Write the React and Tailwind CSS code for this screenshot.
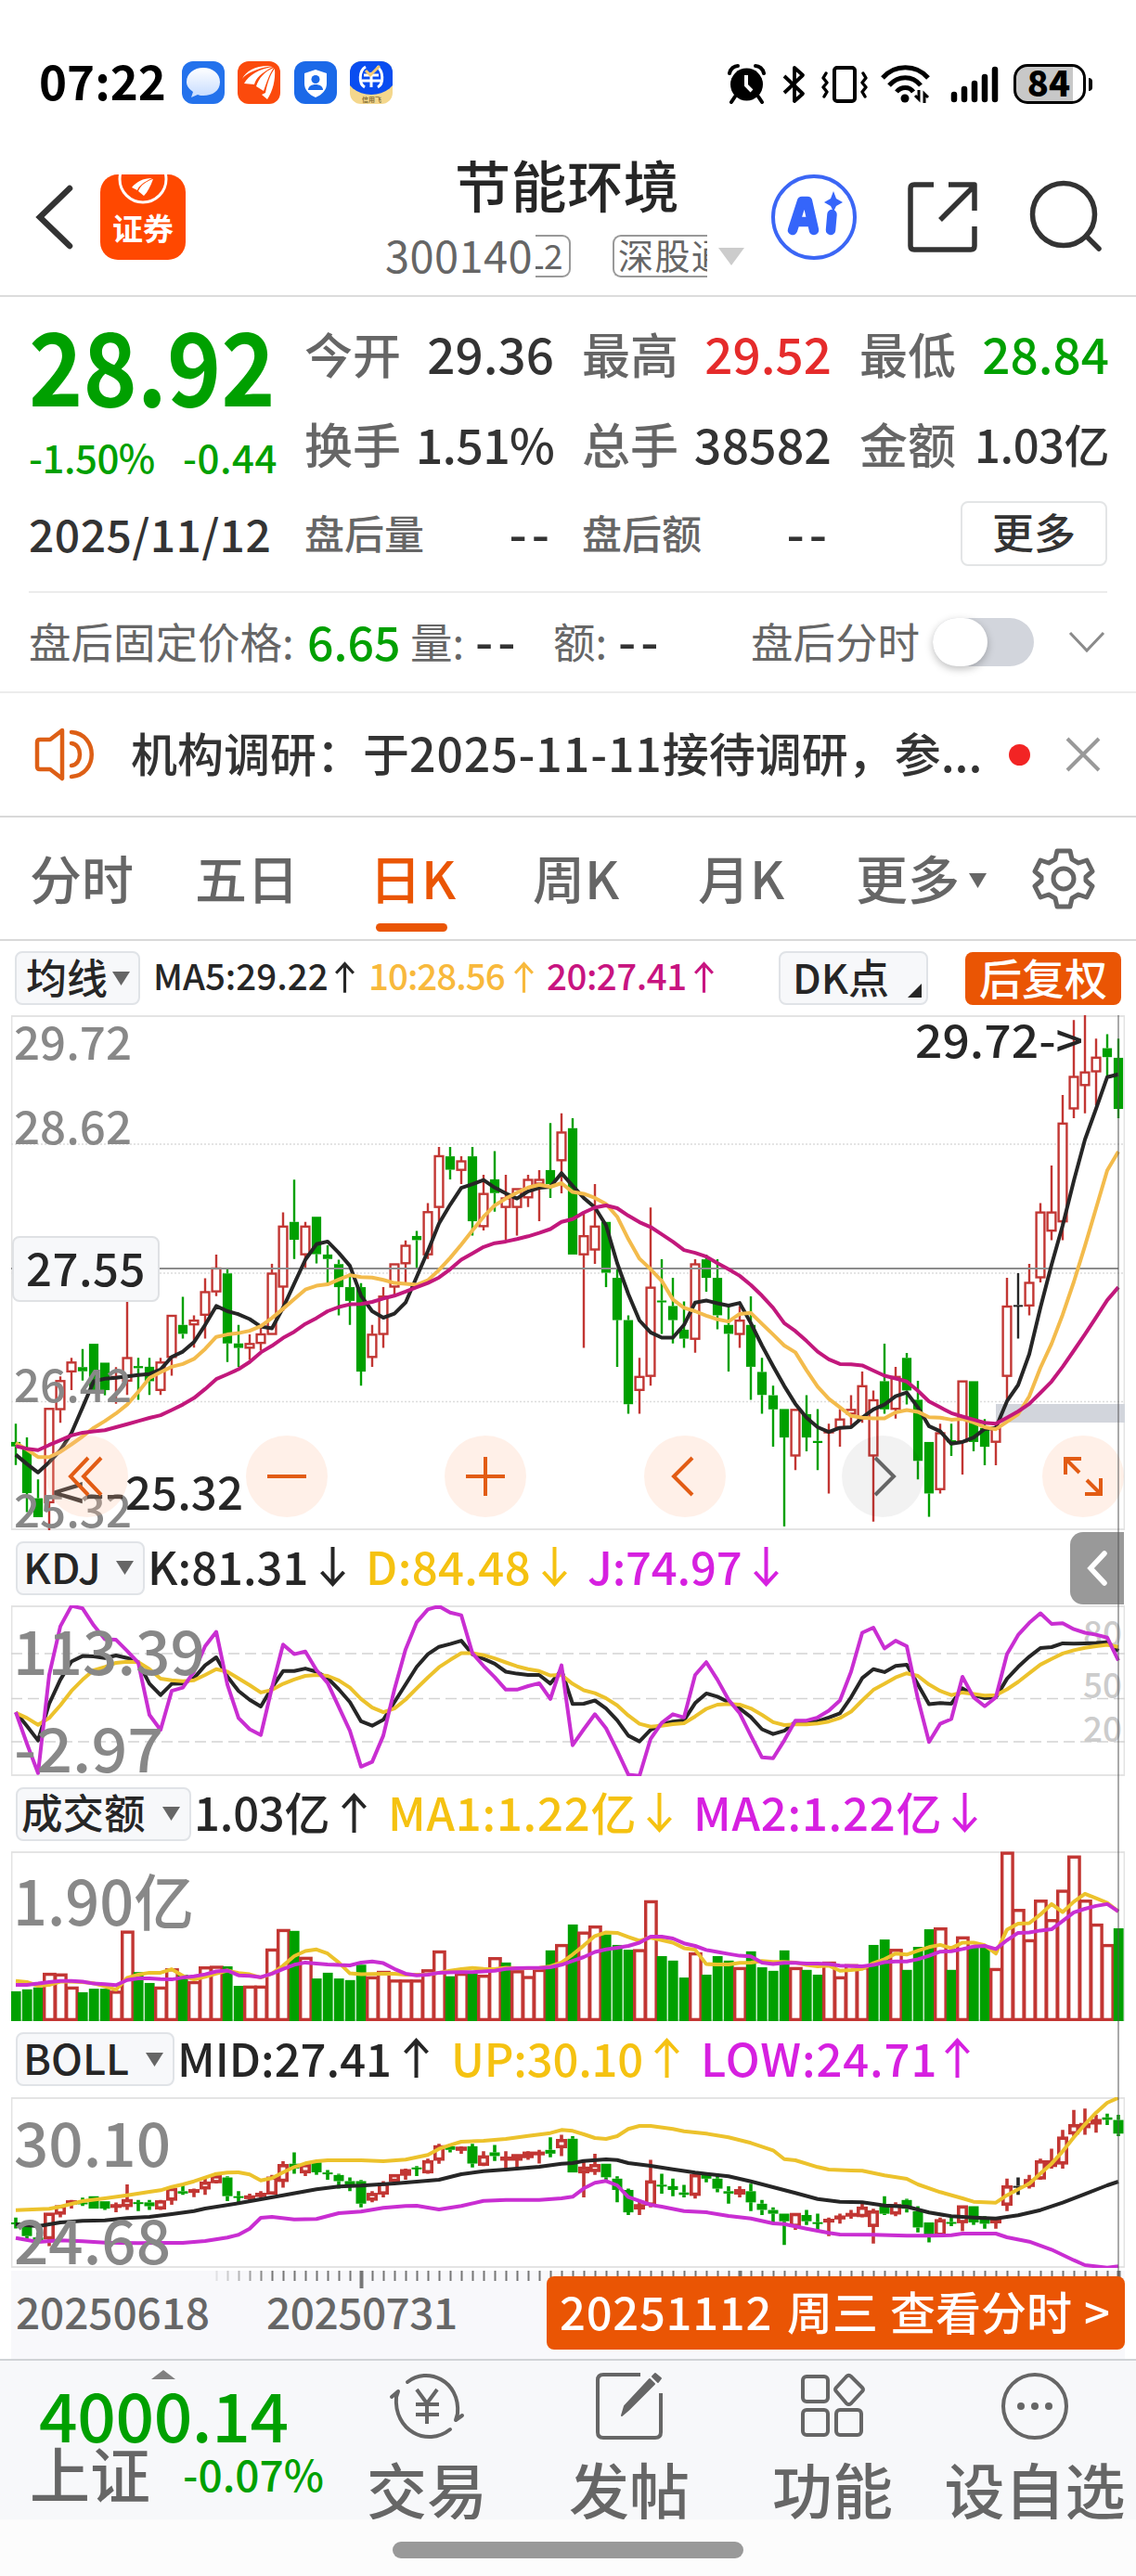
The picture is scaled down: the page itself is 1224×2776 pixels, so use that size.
import React from "react";

const FONT = "font-['Noto_Sans_CJK_SC','Liberation_Sans',sans-serif]";
const GREEN = "#00a000";
const RED = "#c23633";
const YELLOW = "#ecc22c";
const AMBER = "#f3bb4c";
const PURPLE = "#c92ed2";
const MAGENTA = "#c2187c";
const INK = "#262626";

/* One row per day: colour, high, body top, body bottom, low */
const CANDLES = `g 1228 1281 1294 1348|g 1268 1300 1430 1485|g 1390 1445 1500 1500|r 1183 1183 1458 1540|r 1090 1102 1187 1225|r 1036 1048 1077 1130|g 1010 1063 1075 1102|g 995 995 1130 1130|g 1050 1050 1130 1145|r 1063 1090 1092 1170|r 865 1035 1104 1144|g 1036 1060 1066 1158|g 1036 1062 1104 1144|r 1036 1048 1131 1144|r 912 912 1035 1088|g 858 940 966 980|r 912 926 940 1006|r 804 843 912 980|r 735 774 844 856|g 777 790 994 1048|g 940 994 1007 1062|r 968 994 1008 1042|r 940 966 994 1015|r 762 789 968 968|r 612 652 830 900|g 517 640 692 748|r 640 652 736 775|g 625 625 734 761|g 708 735 748 816|g 750 763 830 912|g 790 830 870 940|g 818 830 1076 1117|r 940 967 1035 1062|r 830 856 968 1007|r 762 762 830 858|r 694 708 762 816|g 666 681 693 775|r 585 610 736 748|r 422 447 598 640|g 422 449 488 516|r 449 462 490 530|g 422 449 638 680|r 503 557 654 665|g 434 516 556 610|r 503 570 598 694|r 543 543 598 680|r 503 516 570 597|r 489 516 530 638|g 352 489 530 570|r 324 378 462 557|g 338 367 735 735|r 610 680 736 1007|r 530 652 722 762|g 640 640 788 830|g 777 803 926 1062|g 912 926 1171 1199|r 1036 1090 1131 1199|r 598 830 1090 1117|g 749 869 874 966|g 803 885 926 994|g 872 954 980 1007|r 749 762 982 1021|g 735 749 803 843|g 749 803 912 953|g 885 940 966 1076|r 885 926 968 1007|g 857 940 1062 1158|g 1036 1077 1144 1199|g 1117 1145 1186 1295|g 1185 1185 1268 1527|r 1186 1186 1322 1363|g 1145 1200 1268 1308|g 1185 1278 1284 1363|r 1228 1250 1252 1431|r 1185 1214 1240 1295|r 1145 1186 1200 1240|r 1076 1117 1214 1225|r 1131 1158 1322 1513|g 995 1104 1186 1199|r 1062 1090 1186 1213|g 1022 1036 1131 1172|g 1103 1158 1336 1390|g 1281 1281 1431 1499|r 1228 1254 1420 1431|g 1228 1276 1282 1322|r 1103 1103 1281 1376|g 1104 1104 1281 1308|g 1214 1240 1295 1349|r 1228 1240 1282 1349|r 803 885 1090 1158|k 789 882 886 980|r 762 816 885 912|r 585 611 803 816|r 476 611 667 693|r 270 352 640 693|r 52 216 311 338|r 38 203 243 324|r 106 160 203 300|g 93 134 160 216|g 106 162 311 338`
  .split("|")
  .map((s) => {
    const [c, ...n] = s.split(" ");
    return [c, ...n.map(Number)];
  });

const MA5 = [1318,1345,1370,1340,1305,1255,1180,1104,1097,1094,1090,1086,1083,1070,1033,1018,990,940,885,900,909,923,945,950,890,820,750,705,697,730,768,855,900,919,907,875,800,725,645,590,541,530,518,540,557,572,551,541,538,498,535,570,598,650,760,850,927,962,977,977,940,875,869,877,884,876,935,1000,1060,1118,1170,1210,1238,1252,1240,1238,1210,1186,1172,1148,1137,1180,1235,1250,1286,1281,1268,1243,1240,1162,1115,1025,890,765,650,520,400,310,218,210];
const MA10 = [1284,1303,1325,1325,1310,1288,1265,1240,1220,1198,1172,1135,1095,1078,1062,1054,1039,1010,975,968,964,957,944,920,893,865,837,826,822,808,795,801,802,809,818,820,823,810,780,745,706,665,625,592,572,555,540,532,538,527,553,558,570,588,625,690,747,778,812,866,890,900,913,924,930,908,905,937,968,1000,1020,1072,1120,1155,1180,1205,1210,1212,1212,1195,1188,1193,1209,1210,1216,1214,1224,1238,1244,1222,1200,1148,1065,995,910,815,710,600,490,435];
const MA20 = [1293,1301,1305,1290,1276,1262,1254,1250,1247,1238,1229,1220,1211,1203,1188,1172,1153,1127,1098,1084,1069,1048,1020,1001,978,960,937,920,900,888,880,879,873,863,855,843,830,818,802,778,750,732,713,702,697,690,682,672,661,640,632,613,598,592,600,622,641,655,676,698,722,730,741,760,778,797,824,855,890,935,958,987,1018,1040,1054,1055,1058,1073,1088,1096,1105,1132,1163,1180,1197,1207,1216,1225,1228,1210,1192,1170,1138,1105,1062,1015,967,918,868,830];

const K_LINE = [567,610,655,540,465,408,391,392,397,389,397,410,477,513,478,477,460,420,395,455,500,528,549,490,438,438,430,440,460,495,535,595,609,590,535,480,425,385,362,353,343,385,400,415,440,446,450,450,477,435,541,540,530,555,592,640,658,622,605,596,592,538,508,518,535,555,582,620,635,625,597,598,595,583,570,520,460,432,441,422,418,480,542,538,540,492,513,523,520,462,425,393,366,363,351,352,351,350,348,375];
const D_LINE = [569,585,606,585,545,500,465,435,425,412,409,410,432,462,467,470,467,450,432,440,461,482,505,497,478,464,453,450,453,467,490,525,552,567,555,527,492,458,426,403,382,382,388,398,411,423,432,438,452,450,478,498,507,523,545,577,603,612,609,604,601,580,556,543,541,543,555,575,598,607,605,605,602,596,585,565,530,497,478,458,445,453,480,500,513,505,510,515,513,495,472,445,418,400,383,373,365,360,356,362];
const J_LINE = [567,665,757,450,298,234,242,295,338,340,375,412,575,622,500,490,440,360,315,480,585,620,638,490,355,385,377,435,475,550,625,737,722,640,495,370,285,245,235,255,263,382,422,457,496,496,485,476,525,420,670,620,573,617,687,762,766,650,600,573,583,450,410,465,528,570,640,708,711,655,593,593,583,562,530,440,318,302,367,343,360,525,660,603,588,456,520,548,520,385,325,287,257,290,288,307,318,324,333,405];

const VOLUME = "g1440 g1434 g1428 r1382 r1384 r1425 g1443 g1432 g1432 r1438 r1250 g1380 g1414 r1425 r1368 g1388 r1408 r1362 r1360 g1362 g1423 r1422 r1422 r1306 r1245 g1251 r1332 g1400 g1382 g1400 g1405 g1357 r1393 r1376 r1403 r1403 r1403 r1371 r1312 g1393 r1382 g1382 r1388 r1333 g1350 r1374 r1392 r1370 g1312 r1292 g1231 r1253 r1234 g1262 g1295 g1310 r1308 r1155 g1330 g1344 g1397 r1318 g1388 g1330 g1344 r1364 g1315 g1365 g1376 g1312 r1364 g1373 g1388 r1347 r1393 r1355 r1362 g1295 g1278 r1307 g1373 g1301 g1246 r1240 g1373 r1268 g1298 g1298 r1367 r1003 r1182 r1277 r1153 r1214 r1122 r1015 r1153 r1228 r1292 g1243".split(" ");
const VMA1 = [1408,1411,1423,1420,1410,1410,1411,1415,1425,1435,1398,1388,1382,1382,1371,1392,1403,1395,1385,1375,1383,1387,1397,1385,1360,1330,1314,1309,1322,1350,1384,1387,1386,1385,1385,1388,1388,1388,1382,1376,1371,1367,1370,1371,1366,1368,1368,1367,1362,1350,1325,1297,1267,1256,1257,1270,1282,1272,1280,1288,1305,1310,1355,1356,1356,1351,1350,1345,1348,1348,1350,1358,1362,1360,1376,1374,1370,1352,1340,1322,1325,1313,1302,1295,1305,1288,1288,1296,1322,1247,1228,1227,1200,1167,1192,1160,1135,1149,1163,1190];
const VMA2 = [1420,1420,1416,1411,1408,1408,1410,1416,1418,1421,1405,1400,1400,1402,1403,1397,1393,1387,1378,1375,1390,1392,1396,1385,1370,1357,1350,1353,1356,1358,1359,1350,1347,1352,1370,1385,1390,1388,1382,1381,1380,1380,1378,1376,1370,1368,1367,1367,1365,1357,1345,1333,1317,1309,1304,1298,1288,1269,1269,1275,1290,1298,1311,1317,1323,1329,1331,1350,1355,1351,1351,1353,1353,1355,1360,1361,1362,1358,1349,1347,1347,1340,1329,1316,1315,1308,1300,1298,1308,1280,1257,1256,1250,1246,1220,1193,1182,1173,1167,1190];

/* Bands as "day:value" pairs */
const BOLL_UP = "0:605 2:602 3:601 4:594 5:585 6:576 8:567 10:557 12:546 13:541 14:530 15:522 16:512 17:500 18:488 19:484 20:483 21:490 22:509 23:502 24:483 25:466 26:454 27:447 28:444 31:444 33:447 35:442 37:427 38:407 39:395 40:384 42:381 44:375 46:365 48:356 49:346 50:349 51:360 52:372 53:375 54:366 55:343 56:333 57:333 59:343 60:350 62:358 64:370 66:388 68:412 69:440 70:444 72:466 73:474 75:477 76:478 78:493 80:504 81:522 83:547 85:567 86:578 88:581 89:557 90:538 91:520 92:487 93:455 94:415 95:370 96:328 97:290 98:258 99:242";
const BOLL_MID = "0:651 2:657 4:645 6:640 8:638 10:631 12:627 14:618 16:608 17:600 20:583 22:570 24:557 27:538 29:529 31:526 34:519 38:507 40:489 42:479 44:474 47:465 49:455 50:453 51:446 53:441 54:443 55:453 57:462 59:473 61:484 64:496 66:512 68:531 70:550 72:569 74:578 76:580 78:590 80:594 82:613 84:625 86:629 88:632 90:622 92:605 94:581 96:553 98:525 99:513";
const BOLL_LOW = "0:695 2:708 4:703 6:706 8:710 11:712 13:711 15:711 17:705 19:694 20:685 21:665 22:630 23:627 25:635 27:634 29:615 31:610 33:598 35:592 36:591 38:603 40:592 42:575 44:572 47:572 49:567 50:562 51:535 52:517 53:511 54:525 55:563 57:588 58:594 60:608 62:612 64:624 66:632 68:648 69:650 71:665 73:679 74:684 77:685 80:688 82:688 84:686 85:681 88:681 89:693 91:707 93:733 95:767 96:783 98:791 99:787";

const px = (i) => 17 + 12 * i;
const yMain = (v) => 1080 + v / 2.703;
const ySub = (v) => 1650 + v / 2.904;
const yBoll = (v) => 2180 + v / 3;

const linePath = (data, y) =>
  data.map((v, i) => `${i ? "L" : "M"}${px(i)} ${y(v).toFixed(1)}`).join("");
const pairPath = (text, y) =>
  text
    .split(" ")
    .map((p, n) => {
      const [i, v] = p.split(":").map(Number);
      return `${n ? "L" : "M"}${px(i)} ${y(v).toFixed(1)}`;
    })
    .join("");

function Line({ d, color, w = 4 }) {
  return <path d={d} fill="none" stroke={color} strokeWidth={w} strokeLinejoin="round" />;
}

function Candle({ i, row, y, wick, half }) {
  const [c, hi, top, bot, lo] = row;
  const color = c === "g" ? GREEN : c === "r" ? RED : INK;
  const x = px(i);
  const t = y(top);
  const b = y(bot);
  return (
    <g stroke={color} strokeWidth={wick}>
      <path d={`M${x} ${y(hi)}V${t}M${x} ${b}V${y(lo)}`} />
      {c === "r" ? (
        <rect x={x - half + wick / 2} y={t + wick / 4} width={half * 2 - wick} height={Math.max(b - t - wick / 2, 0.5)} fill="#fff" />
      ) : (
        <rect x={x - half + 0.5} y={t} width={half * 2 - 1} height={Math.max(b - t, 2)} fill={color} stroke="none" />
      )}
    </g>
  );
}

function Label({ x, y, size, w, color = "#888", children }) {
  return (
    <text x={x} y={y} fontSize={size} fill={color} textLength={w} lengthAdjust="spacingAndGlyphs" fontWeight="500">
      {children}
    </text>
  );
}

function Chart({ top, height, children }) {
  return (
    <svg className="ml-3 block" width="1200" height={height} viewBox={`12 ${top} 1200 ${height}`}>
      <rect x="12.500" y={top + 1} width="1199" height={height - 2} fill="none" stroke="#e2e2e2" strokeWidth="1.800" />
      {children}
    </svg>
  );
}

function Arrow({ up, className = "h-[43px] w-[27px]" }) {
  return (
    <svg className={className} viewBox="0 0 27 43" fill="none" stroke="currentColor" strokeWidth="4">
      <path d={up ? "M13.5 43V3M1.5 16L13.5 3L25.5 16" : "M13.5 0V40M1.5 27L13.5 40L25.5 27"} />
    </svg>
  );
}

function Tri({ className = "w-[19px] h-[15px]" }) {
  return (
    <svg className={className} viewBox="0 0 10 8" preserveAspectRatio="none" fill="currentColor">
      <path d="M0 0H10L5 8Z" />
    </svg>
  );
}

function Pick({ children, className }) {
  return (
    <div className={`flex shrink-0 items-center justify-between rounded-lg border-2 border-[#e0e3e7] bg-[#f7f8fa] ${className}`}>
      <span className="pb-[5px]">{children}</span>
      <Tri className="h-[15px] w-[19px] text-[#666]" />
    </div>
  );
}

function Reading({ text, up, className }) {
  return (
    <div className={`flex shrink-0 items-center pb-[5px] ${className}`}>
      <span className="flex-1 text-[49px] leading-[56px]">{text}</span>
      <Arrow up={up} className="mt-[2px] h-[43px] w-[27px] shrink-0" />
    </div>
  );
}

function StatusBar() {
  return (
    <div className="flex h-[150px] items-start pt-[66px]">
      <div className="ml-[42px] w-[154px] text-[51px] leading-[40px] font-bold text-black">07:22</div>
      <div className="flex gap-[14px]">
        <svg width="46" height="46" viewBox="0 0 46 46">
          <defs>
            <linearGradient id="bubble" x1="0" y1="0" x2="0" y2="1">
              <stop offset="0" stopColor="#fff" />
              <stop offset="1" stopColor="#c5dbff" />
            </linearGradient>
          </defs>
          <rect width="46" height="46" rx="12" fill="#2472ec" />
          <path d="M23 7C33 7 41 13 41 22.500S33 37 23 37C21 37 19 37 17 36L10 39L12 33C8 30 5 27 5 22.500C5 13 13 7 23 7Z" fill="url(#bubble)" />
        </svg>
        <svg width="46" height="46" viewBox="0 0 46 46">
          <rect width="46" height="46" rx="12" fill="#fb4a0c" />
          <g fill="#fff">
            <path d="M5 19C9 10 20 4 37 5C20 8 9 13 5 19Z" />
            <path d="M7 24C12 15 23 8 38 6C25 13 20 18 18 25Z" />
            <path d="M20 27C23 18 29 11 39 7C33 16 31 24 28 32Z" />
            <path d="M30 34C32 24 35 14 40 8C41 20 38 32 32 41L26 36Z" />
          </g>
        </svg>
        <svg className="ml-px" width="46" height="46" viewBox="0 0 46 46">
          <rect width="46" height="46" rx="12" fill="#1b69e8" />
          <path d="M23 9L35 13V24C35 31 30 36 23 39C16 36 11 31 11 24V13Z" fill="#fff" />
          <circle cx="23" cy="19.500" r="4.500" fill="#1b69e8" />
          <path d="M15 31C15 23 31 23 31 31Z" fill="#1b69e8" />
        </svg>
        <svg width="46" height="46" viewBox="0 0 46 46">
          <defs>
            <clipPath id="appClip"><rect width="46" height="46" rx="12" /></clipPath>
          </defs>
          <g clipPath="url(#appClip)">
            <rect width="46" height="46" fill="#f4d78c" />
            <ellipse cx="23" cy="13" rx="28" ry="23" fill="#0a4df0" />
            <g fill="none" stroke="#fff" strokeWidth="3">
              <path d="M17 6C10 10 9 24 16 28M29 6C36 10 37 24 30 28M15 15H31M13 21H33M23 12V28" />
            </g>
            <path d="M17 10L22 15L32 5" fill="none" stroke="#f4c870" strokeWidth="3" />
            <text x="13" y="44" fontSize="7" fontWeight="700" fill="#8a733a">信用飞</text>
          </g>
        </svg>
      </div>
      <div className="mt-[3px] ml-[361px] flex items-center text-black">
        <svg width="41" height="43" viewBox="0 0 41 43">
          <circle cx="20.500" cy="22" r="17.500" />
          <path d="M8 35L4 41M33 35L37 41M2 10C3 5 7 2 11 2M39 10C38 5 34 2 30 2" fill="none" stroke="#000" strokeWidth="4" strokeLinecap="round" />
          <path d="M20 12V23L26 29" fill="none" stroke="#fff" strokeWidth="4" />
        </svg>
        <svg className="ml-[18px]" width="26" height="42" viewBox="0 0 26 42" fill="none" stroke="#000" strokeWidth="3.800" strokeLinejoin="round">
          <path d="M2 12L22 31L13 39V3L22 11L2 30" />
        </svg>
        <svg className="ml-4" width="50" height="40" viewBox="0 0 50 40" fill="none" stroke="#000" strokeWidth="4" strokeLinecap="round" strokeLinejoin="round">
          <rect x="14" y="2" width="22" height="36" rx="3" />
          <path d="M5 8L2 13L6 18L2 23L6 28L3 33M45 8L48 13L44 18L48 23L44 28L47 33" strokeWidth="3.400" />
        </svg>
        <svg className="ml-[14px]" width="54" height="42" viewBox="0 0 54 42" fill="none" stroke="#000" strokeWidth="5">
          <path d="M2 14C15 -1 38 -1 51 14M9 22C19 11 34 11 43 22M17 29C22 23 31 23 35 29" />
          <circle cx="26" cy="36" r="4.500" fill="#000" stroke="none" />
          <path d="M41 27V37L37 33M47 41V31L51 35" strokeWidth="3" />
        </svg>
        <svg className="ml-[21px]" width="52" height="40" viewBox="0 0 52 40" fill="none" stroke="#000" strokeWidth="6.500" strokeLinecap="round">
          <path d="M4 31V36M15 25V36M26 19V36M37 12V36M48 4V36" />
        </svg>
        <div className="ml-[16px] flex h-[43px] w-[78px] items-center justify-center rounded-[15px] border-[3.500px] border-black bg-gradient-to-r from-[#c8c8c8] from-85% to-white to-85% text-[38px] leading-none font-black">
          <span className="-mt-[6px] -ml-0.5">84</span>
        </div>
        <div className="ml-[3px] h-[14px] w-[4px] rounded-r bg-black" />
      </div>
    </div>
  );
}

function Header() {
  return (
    <div className="flex h-[170px] items-start border-b-2 border-[#dcdcdc]">
      <svg className="mt-[49px] ml-[38px]" width="42" height="70" viewBox="0 0 42 70" fill="none" stroke="#333" strokeWidth="6.500" strokeLinecap="round">
        <path d="M37 4L5 35L37 66" />
      </svg>
      <div className="mt-[38px] ml-[28px] flex h-[92px] w-[92px] flex-col items-center overflow-hidden rounded-[19px] bg-[#ff4800]">
        <svg width="54" height="32" viewBox="0 0 54 32">
          <circle cx="27" cy="5" r="25" fill="none" stroke="#fff" strokeWidth="3" />
          <path d="M15 14C20 8 27 4 37 4C28 8 22 13 21 17ZM22 18C25 11 31 7 38 5C35 13 32 19 28 23Z" fill="#fff" />
        </svg>
        <span className="mt-[7px] text-[33px] leading-[36px] font-bold text-white">证券</span>
      </div>
      <div className="mt-[16px] ml-[215px] flex w-[394px] flex-col">
        <div className="ml-[75px] text-[60px] leading-[64px] font-medium tracking-[0.600px] text-[#262626]">节能环境</div>
        <div className="mt-[16px] flex items-center text-[#666]">
          <span className="w-[162px] pb-[4px] text-[47px] leading-[56px] tracking-[0.400px]">300140</span>
          <div className="h-[46px] w-[38px] overflow-hidden rounded-r-[9px] border-2 border-l-0 border-[#999]">
            <div className="-ml-[11px] w-14 text-[37px] leading-[38px]">L2</div>
          </div>
          <div className="ml-[45px] h-[46px] w-[102px] overflow-hidden rounded-l-[9px] border-2 border-r-0 border-[#999]">
            <div className="ml-1 w-[130px] text-[38px] leading-[38px] tracking-[1.500px]">深股通</div>
          </div>
          <Tri className="ml-[12px] h-[19px] w-[28px] text-[#ccc]" />
        </div>
      </div>
      <svg className="mt-[36px] ml-[20px] shrink-0" width="96" height="96" viewBox="0 0 96 96">
        <circle cx="48" cy="48" r="44" fill="#fff" stroke="#3b66f5" strokeWidth="4" />
        <g fill="none" stroke="#3565fa" strokeWidth="10.500" strokeLinecap="round" strokeLinejoin="round">
          <path d="M25 62L35 31H41L48 62M30 53H45M67.500 45L66 62" />
        </g>
        <path d="M69 20L72 28L79 32L72 36L69 42L66 36L59 32L66 28Z" fill="#3565fa" />
      </svg>
      <svg className="mt-[45px] ml-[52px] shrink-0" width="78" height="78" viewBox="0 0 78 78" fill="none" stroke="#333" strokeWidth="5.500" strokeLinejoin="round">
        <path d="M29 4H8Q4 4 4 8V70Q4 74 8 74H69Q73 74 73 70V49M45 4H73V32M73 5L36 42" />
      </svg>
      <svg className="mt-[43px] ml-[54px] shrink-0" width="80" height="80" viewBox="0 0 80 80" fill="none" stroke="#333" strokeWidth="5.500" strokeLinecap="round">
        <circle cx="37" cy="38" r="33.500" />
        <path d="M62 62L75 75" />
      </svg>
    </div>
  );
}

function Cell({ label, value, className = "text-[53px] text-[#333]", small }) {
  return (
    <div className="flex h-[97px] items-center justify-between whitespace-nowrap">
      <span className={small ? "pb-[3px] text-[43px] text-[#666]" : "text-[52px] text-[#666]"}>{label}</span>
      <span className={`-mr-[2px] ${className}`}>{value}</span>
    </div>
  );
}

function Dashes({ className = "" }) {
  return (
    <span className={`inline-block text-[54px] leading-none font-medium tracking-[5px] text-[#333] ${className}`}>--</span>
  );
}

function Quote() {
  return (
    <div className="mx-[31px] flex h-[319px] border-b-2 border-[#ececec] font-medium leading-none">
      <div className="w-[299px]">
        <div className="mt-[16px] origin-left scale-x-[0.908] text-[109px] leading-[110px] font-bold text-[#00a000]">28.92</div>
        <div className="mt-[22px] flex text-[42px] leading-[48px] text-[#00a000]">
          <span className="w-[166px] tracking-[-0.500px]">-1.50%</span>
          <span className="tracking-[0.500px]">-0.44</span>
        </div>
        <div className="mt-[30px] text-[48px] leading-[56px] tracking-[0.500px] text-[#333]">2025/11/12</div>
      </div>
      <div className="mt-[12px] grid h-[291px] grid-cols-[267px_267px_267px] gap-x-[32px]">
        <Cell label="今开" value="29.36" />
        <Cell label="最高" value="29.52" className="text-[53px] text-[#e52b2b]" />
        <Cell label="最低" value="28.84" className="text-[53px] text-[#00a000]" />
        <Cell label="换手" value="1.51%" className="text-[52px] tracking-[-0.800px] text-[#333]" />
        <Cell label="总手" value="38582" className="text-[52px] text-[#333]" />
        <Cell label="金额" value="1.03亿" className="text-[49px] tracking-[-0.500px] text-[#333]" />
        <Cell small label="盘后量" value={<Dashes className="pb-[4px]" />} />
        <Cell small label="盘后额" value={<Dashes className="pb-[4px]" />} />
        <div className="flex h-[97px] items-center justify-end">
          <div className="flex h-[70px] w-[158px] items-center justify-center rounded-lg border-2 border-[#e3e5e6] pb-[3px] text-[45px] leading-[56px] text-[#333]">更多</div>
        </div>
      </div>
    </div>
  );
}

function AfterHours() {
  return (
    <div className="flex h-[108px] items-center border-b-2 border-[#ececec] text-[45.500px] leading-none text-[#666]">
      <span className="ml-[31px] w-[300px] pb-[3px]">盘后固定价格:</span>
      <span className="w-[111px] pb-[4px] text-[50px] font-medium text-[#00a000]">6.65</span>
      <span className="w-[70px] pb-[3px]">量:</span>
      <Dashes className="w-[84px] pb-[6px]" />
      <span className="w-[70px] pb-[3px]">额:</span>
      <Dashes className="w-[143px] pb-[6px]" />
      <span className="w-[196px] pb-[3px]">盘后分时</span>
      <div className="h-[52px] w-[109px] rounded-full bg-[#d2d5dc]">
        <div className="h-[52px] w-[59px] rounded-full bg-white shadow-[0_3px_8px_rgba(0,0,0,0.250)]" />
      </div>
      <svg className="ml-[37px]" width="40" height="24" viewBox="0 0 40 24" fill="none" stroke="#8a8a8a" strokeWidth="3">
        <path d="M2 2L20 21L38 2" />
      </svg>
    </div>
  );
}

function News() {
  return (
    <div className="flex h-[134px] items-center border-b-2 border-[#d9d9d9] whitespace-nowrap">
      <svg className="ml-[36px]" width="70" height="60" viewBox="0 0 70 60" fill="none" stroke="#dd5f16" strokeWidth="4.500" strokeLinejoin="round" strokeLinecap="round">
        <path d="M31 4L18 14H7Q4 14 4 17V43Q4 46 7 46H18L31 56ZM41 18C53 19 53 41 41 42M41 6C70 8 70 52 41 54" />
      </svg>
      <div className="ml-[35px] w-[946px] pb-[7px] text-[50px] leading-[60px] font-medium text-[#333]">
        机构调研：于<span className="tracking-[0.900px]">2025-11-11</span>接待调研，参...
      </div>
      <div className="h-[23px] w-[23px] rounded-full bg-[#f22424]" />
      <svg className="ml-[38px]" width="38" height="38" viewBox="0 0 38 38" fill="none" stroke="#999" strokeWidth="4">
        <path d="M2 2L36 36M36 2L2 36" />
      </svg>
    </div>
  );
}

function Gear() {
  return (
    <svg width="68" height="68" viewBox="0 0 68 68" fill="none" stroke="#666" strokeWidth="5" strokeLinejoin="round">
      <path d="M27 4H41L43 13L50 17L59 14L65 26L58 32V36L65 42L59 54L50 51L43 55L41 64H27L25 55L18 51L9 54L3 42L10 36V32L3 26L9 14L18 17L25 13Z" />
      <circle cx="34" cy="34" r="11" />
    </svg>
  );
}

function Tabs() {
  return (
    <div className="flex h-[133px] items-start border-b-2 border-[#d9d9d9] pt-[28px] text-[56px] leading-[72px] font-medium whitespace-nowrap text-[#666]">
      <span className="ml-[32px] w-[178px]">分时</span>
      <span className="w-[188px]">五日</span>
      <span className="flex w-[176px] flex-col text-[#ea5504]">
        日K
        <i className="mt-[14px] ml-[7px] h-[9px] w-[77px] rounded-full bg-[#ea5504]" />
      </span>
      <span className="w-[178px]">周K</span>
      <span className="w-[170px]">月K</span>
      <span className="w-[122px]">更多</span>
      <Tri className="mt-[32px] h-[16px] w-[19px]" />
      <span className="mt-[4px] ml-[49px]"><Gear /></span>
    </div>
  );
}

function MaHeader() {
  return (
    <div className="flex h-[80px] items-center text-[38.500px] leading-none font-medium whitespace-nowrap text-[#262626]">
      <Pick className="ml-[16px] h-[58px] w-[135px] pr-[9px] pl-[10px] text-[44px]">均线</Pick>
      <span className="ml-[14px] w-[196px] pb-[7px]">MA5:29.22</span>
      <Arrow up className="mb-[3px] h-[40px] w-[21px]" />
      <span className="ml-[15px] flex w-[192px] items-center text-[#f8b93c]">
        <span className="w-[157px] pb-[7px] tracking-[-1px]">10:28.56</span>
        <Arrow up className="mb-[3px] h-[40px] w-[21px]" />
      </span>
      <span className="flex w-[250px] items-center text-[#c81480]">
        <span className="w-[159px] pb-[7px] tracking-[-0.500px]">20:27.41</span>
        <Arrow up className="mb-[3px] h-[40px] w-[21px]" />
      </span>
      <div className="flex h-[58px] w-[161px] items-center rounded-lg border-2 border-[#e0e3e7] bg-[#f7f8fa] pl-[13px] text-[44px]">
        <span className="w-[124px] pb-[5px]">DK点</span>
        <svg className="mt-[26px]" width="15" height="15" viewBox="0 0 15 15"><path d="M15 0V15H0Z" fill="#262626" /></svg>
      </div>
      <div className="ml-[40px] flex h-[57px] w-[168px] items-center justify-center rounded-lg bg-[#ea5504] pb-[4px] text-[46px] text-white">后复权</div>
    </div>
  );
}

function RoundButton({ gray, children, className }) {
  return (
    <div className={`flex h-[88px] w-[88px] shrink-0 items-center justify-center rounded-full ${gray ? "bg-black/5" : "bg-[rgba(255,190,155,0.230)]"} ${className}`}>
      <svg width="48" height="48" viewBox="0 0 48 48" fill="none" stroke={gray ? "#666" : "#e25c14"} strokeWidth="4">
        {children}
      </svg>
    </div>
  );
}

function MainChart() {
  return (
    <div className="relative">
      <Chart top={1094} height={555}>
        <g stroke="#dcdcdc" strokeWidth="1.500" strokeDasharray="2 2">
          <path d="M12 1233H1212M12 1372H1212M12 1510.500H1212" />
        </g>
        <rect x="1073" y="1513" width="139" height="20" fill="#d2d5dc" />
        {CANDLES.map((row, i) => (
          <Candle key={i} i={i} row={row} y={yMain} wick={2.4} half={5.6} />
        ))}
        <path d="M12 1367H1205" stroke="#8c8c8c" strokeWidth="2" />
        <Line d={linePath(MA5, yMain)} color={INK} />
        <Line d={linePath(MA10, yMain)} color={AMBER} />
        <Line d={linePath(MA20, yMain)} color={MAGENTA} />
        <Label x={15} y={1142} size={49} w={127}>29.72</Label>
        <Label x={15} y={1233} size={49} w={127}>28.62</Label>
        <Label x={15} y={1511} size={49} w={127}>26.42</Label>
        <Label x={15} y={1646} size={49} w={127}>25.32</Label>
        <Label x={986} y={1140} size={49} w={181} color={INK}>{"29.72->"}</Label>
        <Label x={56} y={1627} size={49} w={79} color={INK}>{"<--"}</Label>
        <Label x={135} y={1627} size={49} w={127} color={INK}>25.32</Label>
      </Chart>
      <div className="absolute top-[238px] left-[13px] flex h-[71px] w-[159px] items-center justify-center rounded-lg border-2 border-[#dfe1e4] bg-[#f7f8fa] pb-[6px] text-[49px] leading-none font-medium tracking-[0.500px] text-[#262626]">27.55</div>
      <div className="absolute top-[453px] left-[50px] flex">
        <RoundButton><path d="M25 4L6 24L25 44M39 4L20 24L39 44" /></RoundButton>
        <RoundButton className="ml-[127px]"><path d="M3 24H45" /></RoundButton>
        <RoundButton className="ml-[126px]"><path d="M3 24H45M24 3V45" /></RoundButton>
        <RoundButton className="ml-[127px]"><path d="M32 4L12 24L32 44" /></RoundButton>
        <RoundButton gray className="ml-[125px]"><path d="M16 4L36 24L16 44" /></RoundButton>
        <RoundButton className="ml-[128px]"><path d="M5 22V5H22M5 5L20 20M43 26V43H26M43 43L28 28" /></RoundButton>
      </div>
    </div>
  );
}

function KdjPanel() {
  return (
    <div>
      <div className="flex h-[81px] items-center font-medium text-[#262626]">
        <Pick className="ml-[17px] h-[58px] w-[139px] pr-[10px] pl-[6px] text-[45px] leading-none">KDJ</Pick>
        <Reading text="K:81.31" className="ml-[3px] w-[213px]" />
        <Reading text="D:84.48" className="ml-[22px] w-[217px] tracking-[0.400px] text-[#f5c211]" />
        <Reading text="J:74.97" className="ml-[22px] w-[206px] tracking-[-0.200px] text-[#d620e0]" />
        <div className="ml-[314px] flex h-[78px] w-[58px] items-center justify-center rounded-l-[14px] bg-[#999]">
          <svg width="22" height="38" viewBox="0 0 22 38" fill="none" stroke="#fff" strokeWidth="5.500" strokeLinecap="round"><path d="M19 3L4 19L19 35" /></svg>
        </div>
      </div>
      <Chart top={1730} height={184}>
        <path d="M12 1782H1212M12 1830.500H1212M12 1877H1212" stroke="#d4d4d4" strokeWidth="1.500" strokeDasharray="12 6" />
        <Label x={1167} y={1774} size={37} w={42} color="#ccc">80</Label>
        <Label x={1167} y={1830} size={37} w={42} color="#ccc">50</Label>
        <Label x={1167} y={1877} size={37} w={42} color="#ccc">20</Label>
        <Line d={linePath(K_LINE, ySub)} color={INK} />
        <Line d={linePath(D_LINE, ySub)} color={YELLOW} />
        <Line d={linePath(J_LINE, ySub)} color={PURPLE} />
        <Label x={14} y={1805} size={66} w={207}>113.39</Label>
        <Label x={15} y={1910} size={66} w={161}>-2.97</Label>
      </Chart>
    </div>
  );
}

function VolumePanel() {
  return (
    <div>
      <div className="flex h-[81px] items-center font-medium text-[#262626]">
        <Pick className="ml-[17px] h-[58px] w-[189px] pr-[10px] pl-[4px] text-[44.500px] leading-none">成交额</Pick>
        <Reading text="1.03亿" up className="ml-[3px] w-[186px] tracking-[-0.200px]" />
        <Reading text="MA1:1.22亿" className="ml-[23px] w-[306px] tracking-[0.800px] text-[#f5c211]" />
        <Reading text="MA2:1.22亿" className="ml-[23px] w-[306px] tracking-[0.800px] text-[#d620e0]" />
      </div>
      <Chart top={1995} height={183}>
        {VOLUME.map((v, i) => {
          const y = ySub(Number(v.slice(1)));
          return v[0] === "g" ? (
            <rect key={i} x={px(i) - 5.2} y={y} width={10.8} height={2178 - y} fill={GREEN} />
          ) : (
            <rect key={i} x={px(i) - 5.3} y={y + 1.7} width={11.4} height={2174.7 - y} fill="#fff" stroke={RED} strokeWidth="3.400" />
          );
        })}
        <Line d={linePath(VMA1, ySub)} color={YELLOW} />
        <Line d={linePath(VMA2, ySub)} color={PURPLE} />
        <Label x={14} y={2075} size={66} w={195}>1.90亿</Label>
      </Chart>
    </div>
  );
}

function BollPanel() {
  const y = (v) => yBoll(277 + (v - 38) * 0.296);
  return (
    <div>
      <div className="flex h-[82px] items-center font-medium text-[#262626]">
        <Pick className="ml-[17px] h-[58px] w-[171px] pr-[10px] pl-[6px] text-[45px] leading-none">BOLL</Pick>
        <Reading text="MID:27.41" up className="ml-[3px] w-[271px]" />
        <Reading text="UP:30.10" up className="ml-[24px] w-[246px] tracking-[-0.200px] text-[#f5c211]" />
        <Reading text="LOW:24.71" up className="ml-[23px] w-[290px] tracking-[0.900px] text-[#d620e0]" />
      </div>
      <Chart top={2260} height={184}>
        {CANDLES.map((row, i) => (
          <Candle key={i} i={i} row={row} y={y} wick={3.6} half={6} />
        ))}
        <Line d={pairPath(BOLL_UP, yBoll)} color={YELLOW} />
        <Line d={pairPath(BOLL_MID, yBoll)} color={INK} />
        <Line d={pairPath(BOLL_LOW, yBoll)} color={PURPLE} />
        <Label x={15} y={2335} size={66} w={169}>30.10</Label>
        <Label x={15} y={2440} size={66} w={169}>24.68</Label>
      </Chart>
    </div>
  );
}

function DateAxis() {
  const ticks = [];
  for (let i = 18; i < 100; i++) ticks.push(i);
  return (
    <div className="mt-[3px] ml-3 h-[95px] w-[1200px] bg-[#f8f8fb]">
      <svg className="block" width="1200" height="19" viewBox="12 0 1200 19">
        {ticks.map((i) => {
          const major = i === 31 || i === 65 || i === 99;
          return <path key={i} d={`M${px(i) + 0.5} 0V${major ? 19 : 11}`} stroke="#777" strokeWidth={major ? 4 : 2} opacity={Math.min(1, (i - 17) / 6)} />;
        })}
      </svg>
      <div className="-mt-[13px] flex h-[79px] items-center text-[46px] leading-none font-medium whitespace-nowrap text-[#666]">
        <span className="ml-[5px] w-[270px] pb-[6px] tracking-[-0.100px]">20250618</span>
        <span className="w-[302px] pb-[6px] tracking-[-0.500px]">20250731</span>
        <div className="flex h-[79px] w-[623px] items-center rounded-lg bg-[#ea5504] pb-[7px] pl-[14px] text-[49px] text-white">
          <span className="tracking-[0.700px]">20251112</span>
          <span className="ml-[16px]">周三</span>
          <span className="ml-[13px]">查看分时</span>
          <span className="ml-[13px]">&gt;</span>
        </div>
      </div>
    </div>
  );
}

function NavItem({ label, className, children, width = 76 }) {
  return (
    <div className={`flex shrink-0 flex-col items-center pt-[9px] ${className}`}>
      <svg width={width} height="80" viewBox="0 0 76 80" fill="none" stroke="#666" strokeWidth="4" strokeLinejoin="round" className="shrink-0 overflow-visible">
        {children}
      </svg>
      <span className="mt-[12px] text-[65px] leading-[72px] whitespace-nowrap">{label}</span>
    </div>
  );
}

function BottomNav() {
  return (
    <div className="flex h-[173px] overflow-hidden border-t-2 border-[#d0d3d6] bg-[#f7f8fa] font-medium text-[#666]">
      <div className="flex w-[380px] flex-col">
        <svg className="mt-[10px] ml-[163px]" width="26" height="10" viewBox="0 0 26 10"><path d="M13 0L26 10H0Z" fill="#808080" /></svg>
        <span className="mt-[3px] ml-[42px] text-[73px] leading-[66px] tracking-[-0.400px] text-[#00a000]">4000.14</span>
        <div className="mt-[-3px] flex items-center leading-[66px]">
          <span className="ml-[32px] w-[165px] text-[65px]">上证</span>
          <span className="mt-[2px] text-[46px] text-[#00a000]">-0.07%</span>
        </div>
      </div>
      <NavItem label="交易" className="w-[160px]">
        <path d="M17 14C38 -3 74 12 71 48L69 55L76 50M63 65C38 85 2 66 5 30L7 24L0 30" strokeLinecap="round" />
        <path d="M27 22L38 37L49 22M38 37V59M26 38H51M26 49H51" />
      </NavItem>
      <NavItem label="发帖" className="ml-[58px] w-[160px]">
        <path d="M50 6H10Q4 6 4 12V68Q4 74 10 74H66Q72 74 72 68V26" />
        <path d="M30 50L33 40L60 11L65 16L37 44ZM63 8L66 5L72 10L69 14Z" fill="#666" strokeWidth="2" />
      </NavItem>
      <NavItem label="功能" className="ml-[59px] w-[160px]">
        <rect x="6" y="8" width="27" height="27" rx="4" />
        <rect x="6" y="44" width="27" height="27" rx="4" />
        <rect x="42" y="44" width="27" height="27" rx="4" />
        <path d="M53 8Q55.500 5.500 58 8L70 20Q72 22 70 24L58 37Q55.500 39 53 37L42 24Q40 22 42 20Z" />
      </NavItem>
      <NavItem label="设自选" className="ml-[38px] w-[200px]">
        <circle cx="38" cy="40" r="34" />
        <g fill="#666" stroke="none"><circle cx="23" cy="40" r="4" /><circle cx="38" cy="40" r="4" /><circle cx="53" cy="40" r="4" /></g>
      </NavItem>
    </div>
  );
}

export default function App() {
  return (
    <div className={`h-[2776px] w-[1224px] overflow-hidden bg-white ${FONT}`}>
      <StatusBar />
      <Header />
      <Quote />
      <AfterHours />
      <News />
      <Tabs />
      <div className="relative">
        <MaHeader />
        <MainChart />
        <KdjPanel />
        <VolumePanel />
        <BollPanel />
        <DateAxis />
        <div className="absolute top-[80px] left-[1204px] h-[1359px] w-[2px] bg-[#555]/50" />
      </div>
      <BottomNav />
      <div className="flex h-[62px] justify-center bg-[#fcfcfc] pt-[24px]">
        <div className="h-[18px] w-[378px] rounded-full bg-[#999]" />
      </div>
    </div>
  );
}
